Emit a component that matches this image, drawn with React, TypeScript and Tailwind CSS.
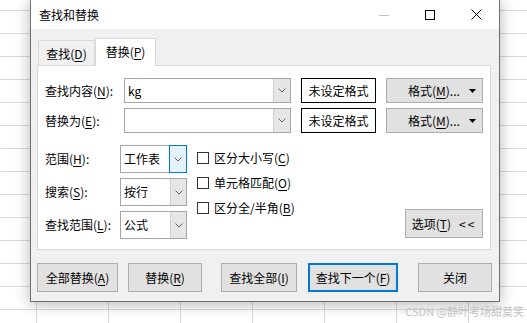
import React from 'react';

/* Excel-style "查找和替换" dialog over a spreadsheet grid */

const FONT = "font-['Microsoft_YaHei_UI','Noto_Sans_CJK_SC',sans-serif]";

function U({ c }: { c: string }) {
  return <span className="underline underline-offset-[2px]">{c}</span>;
}

function Chevron() {
  return (
    <svg width="8" height="5" viewBox="0 0 8 5">
      <polyline points="0.5,0.5 4,4 7.5,0.5" fill="none" stroke="#606060" strokeWidth="1" />
    </svg>
  );
}

function Caret() {
  return (
    <svg width="7" height="4" viewBox="0 0 7 4">
      <polygon points="0,0 7,0 3.5,4" fill="#000" />
    </svg>
  );
}

function Btn({ w, className = '', focused = false, children }: { w: string; className?: string; focused?: boolean; children: React.ReactNode }) {
  return (
    <div
      className={`${w} h-full flex items-center justify-center bg-[#e1e1e1] text-[12px] leading-none ${
        focused ? 'border-2 border-[#0078d7]' : 'border border-[#adadad]'
      } ${className}`}
    >
      {children}
    </div>
  );
}

function ComboInput({ value }: { value: string }) {
  return (
    <div className="w-[167px] h-full border border-[#a6a6a6] flex items-center bg-white">
      <span className="pl-[3px] text-[12px] leading-none">{value}</span>
      <div className="ml-auto w-[17px] h-full bg-[#e6e6e6] border-l border-[#d0d0d0] flex items-center justify-center">
        <Chevron />
      </div>
    </div>
  );
}

function FormatRow({ label, mn, value, className = '' }: { label: string; mn: string; value: string; className?: string }) {
  return (
    <div className={`flex h-[25px] items-center ${className}`}>
      <div className="w-[79px] text-[12px] leading-none">
        {label}(<U c={mn} />):
      </div>
      <ComboInput value={value} />
      <div className="ml-[10px] w-[75px] h-full border border-black flex items-center justify-center text-[12px] leading-none">
        未设定格式
      </div>
      <div className="ml-[10px] w-[97px] h-full border border-[#adadad] bg-[#e1e1e1] flex items-center pl-[21px] pr-[6px] text-[12px] leading-none">
        <span>
          格式(<U c="M" />)...
        </span>
        <span className="ml-auto">
          <Caret />
        </span>
      </div>
    </div>
  );
}

function SelectRow({ label, mn, value, active = false }: { label: string; mn: string; value: string; active?: boolean }) {
  return (
    <div className="flex h-[28px] items-center">
      <div className="w-[75px] text-[12px] leading-none">
        {label}(<U c={mn} />):
      </div>
      <div className="w-[67px] h-full border border-[#a6a6a6] flex items-center bg-white">
        <span className="pl-[3px] text-[12px] leading-none">{value}</span>
        {active ? (
          <div className="ml-auto -my-px -mr-px w-[18px] h-[28px] bg-[#e5f1fb] border border-[#0078d7] flex items-center justify-center">
            <Chevron />
          </div>
        ) : (
          <div className="ml-auto w-[16px] h-full bg-[#e6e6e6] border-l border-[#d0d0d0] flex items-center justify-center">
            <Chevron />
          </div>
        )}
      </div>
    </div>
  );
}

function Check({ label, mn }: { label: string; mn: string }) {
  return (
    <div className="flex h-[25px] items-center">
      <div className="w-[12px] h-[12px] border border-[#333] bg-white" />
      <span className="ml-[5px] text-[12px] leading-none">
        {label}(<U c={mn} />)
      </span>
    </div>
  );
}

export default function App() {
  return (
    <div
      className={`relative w-[527px] h-[323px] overflow-hidden bg-white text-black ${FONT} bg-[linear-gradient(to_bottom,#dadada_1px,transparent_1px),linear-gradient(to_right,#dadada_1px,transparent_1px)] bg-[size:72px_23px] bg-[position:36px_10px]`}
    >
      {/* dialog window */}
      <div className="absolute left-[30px] top-[-1px] w-[470px] border border-[#707070] bg-[#f0f0f0] shadow-[0_2px_14px_rgba(0,0,0,0.3)] flex flex-col">
        {/* title bar */}
        <div className="h-[29px] bg-white flex items-center">
          <span className="ml-[8px] text-[12px] leading-none">查找和替换</span>
          <div className="ml-auto flex h-full">
            <div className="w-[46px] h-full flex items-center justify-center">
              <svg width="10" height="10" viewBox="0 0 10 10">
                <line x1="0" y1="5.5" x2="10" y2="5.5" stroke="#c4c4c4" strokeWidth="1" />
              </svg>
            </div>
            <div className="w-[46px] h-full flex items-center justify-center">
              <svg width="10" height="10" viewBox="0 0 10 10">
                <rect x="0.5" y="0.5" width="9" height="9" fill="none" stroke="#000" strokeWidth="1" />
              </svg>
            </div>
            <div className="w-[46px] h-full flex items-center justify-center">
              <svg width="11" height="11" viewBox="0 0 11 11">
                <path d="M0.5 0.5 L10.5 10.5 M10.5 0.5 L0.5 10.5" stroke="#000" strokeWidth="1" />
              </svg>
            </div>
          </div>
        </div>

        {/* body */}
        <div className="px-[6px] pt-[9px] pb-[9px]">
          {/* tabs */}
          <div className="flex items-end h-[27px]">
            <div className="ml-[1px] w-[57px] h-[25px] border border-b-0 border-[#d9d9d9] flex items-center justify-center text-[12px] leading-none pt-[2px]">
              查找(<U c="D" />)
            </div>
            <div className="relative z-10 -mb-px w-[61px] h-[28px] bg-white border border-b-0 border-[#d9d9d9] flex items-center justify-center text-[12px] leading-none pb-[1px]">
              替换(<U c="P" />)
            </div>
          </div>

          {/* panel */}
          <div className="w-[454px] border border-[#d9d9d9] bg-white px-[7px] pt-[12px] pb-[10px]">
            <FormatRow label="查找内容" mn="N" value="kg" />
            <FormatRow label="替换为" mn="E" value="" className="mt-[5px]" />

            <div className="mt-[12px] flex">
              <div className="flex flex-col gap-[5px]">
                <SelectRow label="范围" mn="H" value="工作表" active />
                <SelectRow label="搜索" mn="S" value="按行" />
                <SelectRow label="查找范围" mn="L" value="公式" />
              </div>
              <div className="ml-[10px] flex flex-col">
                <Check label="区分大小写" mn="C" />
                <Check label="单元格匹配" mn="O" />
                <Check label="区分全/半角" mn="B" />
              </div>
              <div className="flex-1 flex justify-end items-end">
                <div className="w-[78px] h-[29px] mb-[1px] border border-[#adadad] bg-[#e1e1e1] flex items-center justify-center text-[12px] leading-none">
                  <span>
                    选项(<U c="T" />)
                  </span>
                  <span className="ml-[8px] tracking-[2px]">&lt;&lt;</span>
                </div>
              </div>
            </div>
          </div>

          {/* bottom buttons */}
          <div className="mt-[13px] flex h-[29px]">
            <Btn w="w-[81px]">
              全部替换(<U c="A" />)
            </Btn>
            <Btn w="w-[74px]" className="ml-[10px]">
              替换(<U c="R" />)
            </Btn>
            <Btn w="w-[76px]" className="ml-[19px]">
              查找全部(<U c="I" />)
            </Btn>
            <Btn w="w-[90px]" className="ml-[11px]" focused>
              查找下一个(<U c="F" />)
            </Btn>
            <Btn w="w-[74px]" className="ml-[20px]">
              关闭
            </Btn>
          </div>
        </div>
      </div>

      {/* watermark */}
      <div className="absolute right-[3px] top-[306px] text-[11px] leading-none text-[#c4c4c4]">
        CSDN @静叶考场甜莫笑
      </div>
    </div>
  );
}
